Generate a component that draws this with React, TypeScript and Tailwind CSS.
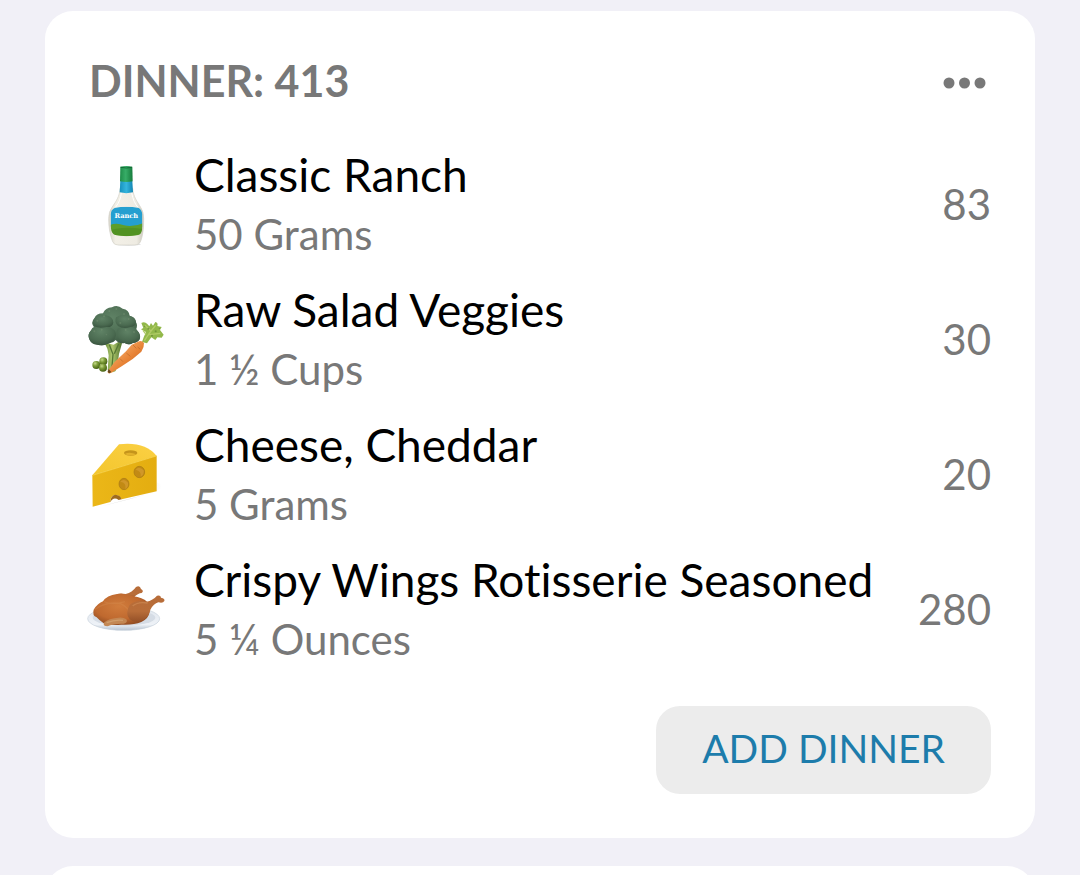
import type { ReactNode } from "react";

function RanchIcon() {
  return (
    <svg viewBox="0 3 288 300" className="h-[100px] w-24 shrink-0" aria-hidden="true">
      <defs>
        <linearGradient id="cap" x1="0" x2="1">
          <stop offset="0" stopColor="#1f8d4a" />
          <stop offset=".45" stopColor="#37ad67" />
          <stop offset="1" stopColor="#167b3c" />
        </linearGradient>
        <linearGradient id="glass" x1="0" x2="1">
          <stop offset="0" stopColor="#d8d5ca" />
          <stop offset=".2" stopColor="#f3f0e7" />
          <stop offset=".8" stopColor="#eeebe2" />
          <stop offset="1" stopColor="#cbc8bd" />
        </linearGradient>
        <linearGradient id="neck" x1="0" x2="1">
          <stop offset="0" stopColor="#1691bd" />
          <stop offset=".5" stopColor="#35b5dd" />
          <stop offset="1" stopColor="#1184b2" />
        </linearGradient>
        <clipPath id="label">
          <path d="M104 159Q139 152 176 159Q185 164 187 178V215Q186 237 174 240Q139 247 106 240Q93 236 92 213V178Q94 163 104 159Z" />
        </clipPath>
      </defs>
      <ellipse cx="145" cy="268" rx="38" ry="4" fill="#dedede" />
      <path d="M120 100H158C160 126 172 140 182 157Q191 170 191 191C191 223 188 245 181 261Q177 270 164 270H114Q102 270 98 260C90 240 86 218 86 191Q86 170 96 157C108 139 119 125 120 100Z" fill="url(#glass)" stroke="#d3d1c9" strokeWidth="2" />
      <path d="M124 112Q122 138 107 156M155 113Q160 142 174 157" stroke="#fff" strokeWidth="3" fill="none" />
      <path d="M121 78H157L159 112Q139 117 119 112Z" fill="url(#neck)" />
      <path d="M121 35Q139 31 157 35L158 79Q139 83 120 79Z" fill="url(#cap)" />
      <path d="M122 37Q139 41 156 37" stroke="#126c35" strokeWidth="3" fill="none" />
      <g clipPath="url(#label)">
        <rect x="90" y="150" width="100" height="66" fill="#249fd0" />
        <path d="M90 210Q110 202 132 211Q158 218 190 204V248H90Z" fill="#5d9e2a" />
        <path d="M90 226Q126 213 190 222V248H90Z" fill="#4b8b1e" opacity=".6" />
      </g>
      <text x="139" y="190" textAnchor="middle" className="fill-white font-['DejaVu_Serif',serif] text-[20px] font-bold">Ranch</text>
    </svg>
  );
}

function VeggiesIcon() {
  return (
    <svg viewBox="0 -12 288 300" className="h-[100px] w-24 shrink-0" aria-hidden="true">
      <defs>
        <radialGradient id="floret" cx=".45" cy=".3" r=".8">
          <stop offset="0" stopColor="#5f8265" />
          <stop offset=".6" stopColor="#4b6b51" />
          <stop offset="1" stopColor="#344e3a" />
        </radialGradient>
        <linearGradient id="stem" x1="0" x2="1">
          <stop offset="0" stopColor="#698e3c" />
          <stop offset=".45" stopColor="#b1c96f" />
          <stop offset="1" stopColor="#4d702b" />
        </linearGradient>
        <linearGradient id="carrot" x1="0" y1="0" x2="1" y2="1">
          <stop offset=".25" stopColor="#f3a765" />
          <stop offset=".55" stopColor="#e88437" />
          <stop offset="1" stopColor="#b95518" />
        </linearGradient>
        <radialGradient id="pea" cx=".35" cy=".3" r=".7">
          <stop offset="0" stopColor="#c5d989" />
          <stop offset=".45" stopColor="#7c9c38" />
          <stop offset="1" stopColor="#486316" />
        </radialGradient>
      </defs>
      <path d="M73 142L101 149L116 140L126 145Q115 176 113 208L107 228Q95 236 83 226L86 181Q84 160 73 142Z" fill="url(#stem)" />
      <path d="M88 149L99 178L95 226M116 147L103 176" stroke="#557834" strokeWidth="4" fill="none" />
      <g fill="url(#floret)">
        <path d="M42 97Q31 82 43 70Q49 55 69 55Q76 38 96 37Q112 28 128 41Q147 44 149 62Q167 66 168 82Q174 91 168 104Q180 112 180 128Q177 142 160 143Q148 153 134 144Q118 148 107 135Q100 144 88 145Q70 155 52 149Q32 148 28 132Q22 119 32 108Z" />
        <path d="M37 99Q49 90 64 94Q78 90 94 99Q108 105 108 121Q104 139 88 144Q72 152 54 149Q33 148 28 133Q22 117 32 107Z" />
        <path d="M113 101Q130 91 146 96Q166 94 173 108Q184 120 179 133Q171 145 158 144Q145 151 132 143Q118 139 112 126Q107 112 113 101Z" />
        <path d="M44 70Q62 56 79 61Q99 65 100 83Q97 98 79 96Q58 101 43 94Q34 82 44 70Z" />
        <path d="M108 67Q126 56 148 62Q165 66 168 81Q168 94 151 96Q130 103 114 93Q102 80 108 67Z" />
      </g>
      <g fill="#829d7b" opacity=".35">
        <circle cx="72" cy="64" r="3" /><circle cx="88" cy="48" r="3" /><circle cx="109" cy="42" r="3" />
        <circle cx="132" cy="57" r="3" /><circle cx="146" cy="72" r="3" /><circle cx="52" cy="77" r="3" />
        <circle cx="43" cy="109" r="3" /><circle cx="65" cy="104" r="3" /><circle cx="137" cy="105" r="3" />
        <circle cx="162" cy="111" r="3" /><circle cx="79" cy="119" r="2" /><circle cx="121" cy="84" r="3" />
      </g>
      <path d="M186 141Q192 123 198 111L183 103L190 99L184 84Q194 79 202 87L208 94L213 84L219 92L226 81Q235 83 232 93L245 96L240 105L251 119L245 128L232 127L226 135L214 127L201 145Z" fill="#92b84a" />
      <path d="M193 137L213 108L195 91M213 108L227 91M208 119L241 115M198 118L189 106" stroke="#b1cb67" strokeWidth="4" fill="none" />
      <g fill="#5f8330" opacity=".65"><circle cx="205" cy="101" r="3" /><circle cx="227" cy="109" r="3" /><circle cx="216" cy="122" r="3" /><circle cx="238" cy="100" r="2" /><circle cx="194" cy="94" r="2" /></g>
      <path d="M174 140Q185 135 192 144Q193 157 184 170L158 192L125 214L94 233Q82 239 83 229L103 202L138 169L155 149Z" fill="url(#carrot)" />
      <path d="M159 150L169 160M139 174L151 184M120 191L129 200M173 156L181 163" stroke="#bc6629" strokeWidth="2" />
      <path d="M86 222L94 231L88 235L83 231Z" fill="#654822" />
      <g fill="url(#pea)"><circle cx="70" cy="199" r="12" /><circle cx="49" cy="210" r="12" /><circle cx="69" cy="218" r="12" /></g>
    </svg>
  );
}

function CheeseIcon() {
  return (
    <svg viewBox="0 -12 288 300" className="h-[100px] w-24 shrink-0" aria-hidden="true">
      <defs>
        <linearGradient id="cheeseTop" x1="0" y1="1" x2="1" y2="0">
          <stop offset="0" stopColor="#f3c62d" />
          <stop offset="1" stopColor="#fbd044" />
        </linearGradient>
        <linearGradient id="cheeseSide" x1="0" x2="1">
          <stop offset="0" stopColor="#ebb718" />
          <stop offset="1" stopColor="#e4ad10" />
        </linearGradient>
        <linearGradient id="cheeseShade" x1="0" x2="1">
          <stop offset="0" stopColor="#bcbcbc" />
          <stop offset="1" stopColor="#fff" />
        </linearGradient>
      </defs>
      <path d="M65 229L222 187L230 157Q250 164 244 173Q230 187 130 212Z" fill="url(#cheeseShade)" />
      <path d="M37 136L117 43Q195 34 230 78Z" fill="url(#cheeseTop)" />
      <path d="M37 135L230 77V184L125 208Q117 193 103 195Q91 199 91 216L38 230Z" fill="url(#cheeseSide)" />
      <path d="M38 136L229 78" stroke="#f8d450" strokeWidth="2" />
      <ellipse cx="152" cy="69" rx="20" ry="8" fill="#c4941b" />
      <path d="M134 72Q149 64 169 73Q151 81 134 72Z" fill="#e2b12b" />
      <g fill="#c28a14" stroke="#a87816" strokeWidth="2"><ellipse cx="178" cy="126" rx="16" ry="17" /><ellipse cx="132" cy="162" rx="15" ry="17" /></g>
      <path d="M167 119Q177 107 191 121Q193 135 182 140Q185 123 167 119ZM121 155Q132 144 144 158Q146 171 136 177Q140 158 121 155Z" fill="#d0972a" />
      <path d="M91 217Q91 197 106 194Q121 195 125 208L116 210Q100 199 91 217Z" fill="#9f6b1e" />
    </svg>
  );
}

function ChickenIcon() {
  return (
    <svg viewBox="0 -27 288 300" className="h-[100px] w-24 shrink-0" aria-hidden="true">
      <defs>
        <linearGradient id="plate" x1="0" y1="0" x2="0" y2="1">
          <stop offset="0" stopColor="#e0e6ee" />
          <stop offset=".75" stopColor="#eef2f7" />
          <stop offset="1" stopColor="#b6c2d0" />
        </linearGradient>
        <radialGradient id="bird" cx=".45" cy=".4" r=".7">
          <stop offset="0" stopColor="#d17c3c" />
          <stop offset=".6" stopColor="#bf692f" />
          <stop offset="1" stopColor="#81431e" />
        </radialGradient>
        <linearGradient id="leg" x1="0" y1="0" x2="0" y2="1">
          <stop offset="0" stopColor="#b76c38" />
          <stop offset=".6" stopColor="#b86d39" />
          <stop offset="1" stopColor="#955128" />
        </linearGradient>
      </defs>
      <ellipse cx="131" cy="146" rx="108" ry="35" fill="url(#plate)" stroke="#c6d0db" strokeWidth="2" />
      <ellipse cx="132" cy="143" rx="94" ry="24" fill="#d5dce5" />
      <path d="M110 73Q121 68 137 72Q157 67 168 51Q180 45 183 57Q193 63 185 69Q174 69 161 83L142 90Z" fill="url(#leg)" />
      <path d="M41 119Q54 99 69 94Q80 76 111 72Q137 69 160 79Q187 82 202 96Q212 108 208 126Q207 145 184 156Q160 166 124 164Q88 167 70 159Q57 150 50 142Q36 137 41 119Z" fill="url(#bird)" />
      <path d="M43 119Q79 93 121 101Q151 113 149 139M72 95Q96 107 135 95" fill="none" stroke="#dc975b" strokeWidth="4" opacity=".25" />
      <path d="M149 105Q166 89 199 95Q219 91 231 77Q242 74 243 83Q256 86 253 93Q249 101 235 97Q221 101 211 119Q208 141 186 152Q162 160 149 148Q134 132 149 105Z" fill="url(#leg)" />
      <path d="M158 108Q174 94 203 99" stroke="#dfa06a" strokeWidth="4" fill="none" opacity=".4" />
      <path d="M73 157Q89 145 109 144Q127 139 139 148Q145 158 131 161Q99 160 83 169Q66 169 73 157Z" fill="#c38753" />
      <path d="M80 158Q105 148 129 151" stroke="#d9ae7c" strokeWidth="4" fill="none" opacity=".6" />
    </svg>
  );
}

type Food = { name: string; amount: string; calories: number; icon: ReactNode };

const foods: Food[] = [
  { name: "Classic Ranch", amount: "50 Grams", calories: 83, icon: <RanchIcon /> },
  { name: "Raw Salad Veggies", amount: "1 ½ Cups", calories: 30, icon: <VeggiesIcon /> },
  { name: "Cheese, Cheddar", amount: "5 Grams", calories: 20, icon: <CheeseIcon /> },
  { name: "Crispy Wings Rotisserie Seasoned", amount: "5 ¼ Ounces", calories: 280, icon: <ChickenIcon /> },
];

function FoodRow({ name, amount, calories, icon }: Food) {
  return (
    <li className="flex min-h-[135px] items-center">
      {icon}
      <div className="ml-[18px] min-w-0 flex-1 pb-1">
        <h3 className="text-[46px] leading-[60px] text-black">{name}</h3>
        <p className="text-[42px] leading-[58px] text-[#787878]">{amount}</p>
      </div>
      <span className="pb-1 text-[42px] leading-[60px] text-[#787878]">{calories}</span>
    </li>
  );
}

export default function App() {
  return (
    <main className="flex h-screen flex-col gap-7 overflow-hidden bg-[#f1f0f7] px-[45px] pt-[11px] font-['Lato','Noto_Sans',sans-serif] [font-variant-ligatures:none]">
      <section className="shrink-0 rounded-[28px] bg-white pt-10 pr-11 pb-11 pl-[35px]">
        <header className="mb-[27px] flex h-[60px] items-center justify-between pl-[9px]">
          <h2 className="text-[43px] leading-[60px] font-bold text-[#787878]">DINNER: 413</h2>
          <button type="button" aria-label="Dinner options" className="flex h-12 items-center px-1 pt-1 text-[#787878]">
            <svg viewBox="0 0 44 12" className="h-3 w-11" fill="currentColor" aria-hidden="true">
              <circle cx="6" cy="6" r="5.5" /><circle cx="21.5" cy="6" r="5.5" /><circle cx="37" cy="6" r="5.5" />
            </svg>
          </button>
        </header>
        <ul>
          {foods.map((food) => <FoodRow key={food.name} {...food} />)}
        </ul>
        <div className="mt-7 flex justify-end">
          <button type="button" className="h-[88px] rounded-3xl bg-[#ececec] px-[46px] pb-1 text-[39px] leading-[60px] text-[#1d7cab]">ADD DINNER</button>
        </div>
      </section>
      <section aria-label="Next meal" className="h-40 shrink-0 rounded-[28px] bg-white" />
    </main>
  );
}
